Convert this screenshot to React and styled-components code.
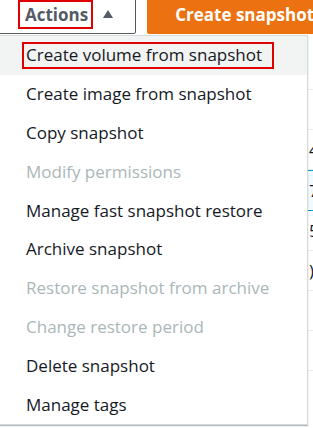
import React from "react"
import styled, { createGlobalStyle } from "styled-components"

const GlobalStyle = createGlobalStyle`
  html, body {
    margin: 0;
    padding: 0;
    background: #fff;
    overflow: hidden;
  }
  body {
    width: 313px;
    height: 428px;
    font-family: "Open Sans", "Noto Sans", sans-serif;
    color: #16191f;
  }
`

const Page = styled.div`
  position: relative;
  width: 313px;
  height: 428px;
  overflow: hidden;
`

const Toolbar = styled.div`
  display: flex;
  align-items: stretch;
  gap: 11px;
  margin: -6px 0 0 -12px;
  height: 40px;
`

const ActionsButton = styled.button`
  display: flex;
  align-items: center;
  padding: 0 22px 0 29px;
  border: 1px solid #545b64;
  border-radius: 2px;
  background: #fff;
  color: #545b64;
  font-family: inherit;
  font-size: 17px;
  font-weight: 700;
`

const Marked = styled.span`
  display: inline-flex;
  align-items: center;
  border: 2px solid #e00000;
  padding: ${(p) => p.$pad || "0 3px 0 5px"};
  height: ${(p) => p.$h || "29px"};
  box-sizing: border-box;
`

const Caret = styled.span`
  width: 0;
  height: 0;
  margin-left: 10px;
  border-left: 5.5px solid transparent;
  border-right: 5.5px solid transparent;
  border-bottom: 8px solid #545b64;
`

const PrimaryButton = styled.button`
  display: flex;
  align-items: center;
  padding: 0 27px;
  border: 1px solid #ec7211;
  border-radius: 2px;
  background: #ec7211;
  color: #fff;
  font-family: inherit;
  font-size: 17px;
  font-weight: 700;
  white-space: nowrap;
`

const Table = styled.div`
  margin-top: 16px;
  display: flex;
  flex-direction: column;
`

const Row = styled.div`
  display: grid;
  grid-template-columns: 309px 120px;
  height: 39px;
  align-items: center;
  border-bottom: 1px solid ${(p) => (p.$selected ? "#00a1c9" : "#eaeded")};
  border-top: ${(p) => (p.$selected ? "1px solid #00a1c9" : "none")};
  background: ${(p) => (p.$selected ? "#f1faff" : "#fff")};
  font-size: 17px;
  color: #16191f;
`

const Cell = styled.span`
  white-space: nowrap;
`

const Menu = styled.ul`
  position: absolute;
  top: 35px;
  left: -20px;
  width: 326px;
  margin: 0;
  padding: 0;
  list-style: none;
  background: #fff;
  border: 1px solid #d5dbdb;
  box-shadow: 0 1px 1px 0 rgba(0, 28, 36, 0.3);
`

const Item = styled.li`
  display: flex;
  align-items: center;
  height: 38.8px;
  padding-left: 45px;
  font-size: 17px;
  line-height: 24px;
  white-space: nowrap;
  color: ${(p) => (p.$disabled ? "#aab7b8" : "#16191f")};
  background: ${(p) => (p.$active ? "#f2f3f3" : "transparent")};
`

const items = [
  { label: "Create volume from snapshot", active: true },
  { label: "Create image from snapshot" },
  { label: "Copy snapshot" },
  { label: "Modify permissions", disabled: true },
  { label: "Manage fast snapshot restore" },
  { label: "Archive snapshot" },
  { label: "Restore snapshot from archive", disabled: true },
  { label: "Change restore period", disabled: true },
  { label: "Delete snapshot" },
  { label: "Manage tags" },
]

const rows = [
  { value: "" },
  { value: "" },
  { value: "4 GiB" },
  { value: "7 GiB", selected: true },
  { value: "5 GiB" },
  { value: ")" },
  { value: "" },
  { value: "" },
]

export default function App() {
  return (
    <Page>
      <GlobalStyle />
      <Toolbar>
        <ActionsButton>
          <Marked>Actions</Marked>
          <Caret />
        </ActionsButton>
        <PrimaryButton>Create snapshot</PrimaryButton>
      </Toolbar>
      <Table>
        {rows.map((r, i) => (
          <Row key={i} $selected={r.selected}>
            <Cell />
            <Cell>{r.value}</Cell>
          </Row>
        ))}
      </Table>
      <Menu>
        {items.map((it) =>
          it.active ? (
            <Item key={it.label} $active>
              <Marked $pad="0 10px 0 2px" $h="27px" style={{ marginLeft: -4 }}>
                {it.label}
              </Marked>
            </Item>
          ) : (
            <Item key={it.label} $disabled={it.disabled}>
              {it.label}
            </Item>
          )
        )}
      </Menu>
    </Page>
  )
}
